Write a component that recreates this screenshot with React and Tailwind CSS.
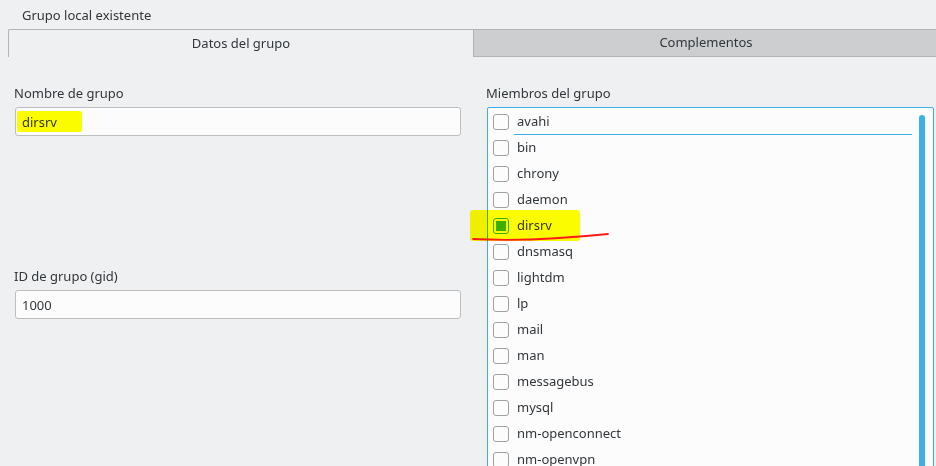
import React from 'react';

const members = [
  'avahi', 'bin', 'chrony', 'daemon', 'dirsrv', 'dnsmasq', 'lightdm', 'lp',
  'mail', 'man', 'messagebus', 'mysql', 'nm-openconnect', 'nm-openvpn',
];

const Checkbox = ({ checked }) => (
  <div
    className={`w-[16px] h-[16px] rounded-[3px] border flex items-center justify-center bg-[#fcfcfc] shrink-0 ${
      checked ? 'border-[#3daee9]' : 'border-[#9fa1a3]'
    }`}
  >
    {checked && <div className="w-[10px] h-[10px] bg-[#3daee9]" />}
  </div>
);

const Field = ({ label, value, className = '' }) => (
  <div className={className}>
    <div className="h-[18px] leading-[18px]">{label}</div>
    <div className="mt-[5px] ml-[1px] h-[29px] bg-[#fcfcfc] border border-[#bcbec0] rounded-[3px] flex items-center px-[6px] pt-[2px]">
      {value}
    </div>
  </div>
);

export default function App() {
  return (
    <div
      className="relative w-[936px] h-[466px] overflow-hidden bg-[#eff0f1] text-[#31363b] text-[13px]"
      style={{ fontFamily: '"Noto Sans", "DejaVu Sans", sans-serif' }}
    >
      <div className="h-[29px] pl-[22px] pt-[6px] leading-[18px]">Grupo local existente</div>

      {/* tabs */}
      <div className="flex h-[28px] pl-[8px]">
        <div className="w-[465px] border-l border-t border-[#b2b4b6] rounded-tl-[2px] flex items-center justify-center pt-[1px]">
          Datos del grupo
        </div>
        <div className="flex-1 bg-[#cdcecf] border-l border-t border-b border-[#b2b4b6] flex items-center justify-center pl-[2px]">
          Complementos
        </div>
      </div>

      {/* content */}
      <div className="flex pt-[27px]">
        <div className="w-[447px] ml-[14px] flex flex-col">
          <Field label="Nombre de grupo" value="dirsrv" />
          <Field label="ID de grupo (gid)" value="1000" className="mt-[131px]" />
        </div>

        <div className="ml-[25px] w-[448px]">
          <div className="h-[18px] leading-[18px]">Miembros del grupo</div>
          <div className="mt-[5px] ml-[1px] h-[400px] border border-[#3daee9] rounded-[2px] bg-[#fcfcfc] flex">
            <div className="flex-1 flex flex-col pt-[1px]">
              {members.map((m, i) => (
                <div key={m} className="h-[26px] flex items-center pl-[5px] gap-[8px] shrink-0">
                  <Checkbox checked={m === 'dirsrv'} />
                  {i === 0 ? (
                    <div className="flex-1 h-[26px] flex items-center border-b border-[#3daee9] pl-[3px] -ml-[3px]">{m}</div>
                  ) : (
                    <span>{m}</span>
                  )}
                </div>
              ))}
            </div>
            <div className="w-[21px] shrink-0 pl-[7px] pt-[7px]">
              <div className="w-[6px] h-full bg-[#3daee9] rounded-t-[3px]" />
            </div>
          </div>
        </div>
      </div>

      {/* highlighter marks */}
      <div className="absolute left-[17px] top-[111px] w-[65px] h-[21px] bg-[#ffff00] mix-blend-multiply rounded-[2px]" />
      <div className="absolute left-[470px] top-[210px] w-[110px] h-[31px] bg-[#ffff00] mix-blend-multiply rounded-[3px]" />
      <svg className="absolute left-0 top-0 pointer-events-none" width="936" height="466">
        <path d="M473 239 Q 530 242 608 234" fill="none" stroke="#ff1a1a" strokeWidth="1.8" strokeLinecap="round" />
      </svg>
    </div>
  );
}
